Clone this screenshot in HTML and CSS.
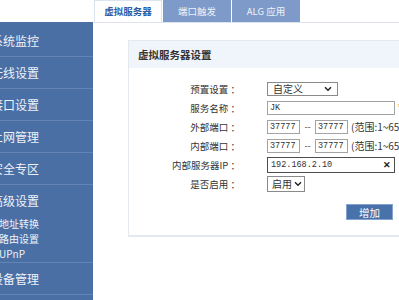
FILE: index.html
```html
<!DOCTYPE html>
<html lang="zh-CN">
<head>
  <meta charset="UTF-8">
  <meta name="viewport" content="width=device-width, initial-scale=1">
  <title>虚拟服务器</title>
  <link rel="stylesheet" href="styles.css">
</head>
<body>
  <div class="page">

    <aside class="sidebar">
      <ul class="nav">
        <li class="nav-item">系统监控</li>
        <li class="nav-item">无线设置</li>
        <li class="nav-item">接口设置</li>
        <li class="nav-item">上网管理</li>
        <li class="nav-item">安全专区</li>
        <li class="nav-item nav-group">
          <div class="nav-title">高级设置</div>
          <ul class="subnav">
            <li>地址转换</li>
            <li>路由设置</li>
            <li>UPnP</li>
          </ul>
        </li>
        <li class="nav-item">设备管理</li>
      </ul>
    </aside>

    <main class="content">
      <nav class="tabs">
        <a class="tab active">虚拟服务器</a>
        <a class="tab">端口触发</a>
        <a class="tab">ALG 应用</a>
      </nav>

      <section class="panel">
        <h3 class="panel-title">虚拟服务器设置</h3>

        <div class="form">
          <label>预置设置 ：</label>
          <div class="field">
            <div class="select select-wide">
              <span>自定义</span>
              <svg width="8" height="6" viewBox="0 0 8 6"><path d="M1 1.2 4 4.3 7 1.2" fill="none" stroke="#222" stroke-width="1.4"/></svg>
            </div>
          </div>

          <label>服务名称 ：</label>
          <div class="field">
            <input class="input input-wide" type="text" value="JK">
            <span class="required">*</span>
          </div>

          <label>外部端口 ：</label>
          <div class="field">
            <input class="input input-port" type="text" value="37777">
            <span class="dash">--</span>
            <input class="input input-port" type="text" value="37777">
            <span class="hint">(范围:1~65535)</span>
          </div>

          <label>内部端口 ：</label>
          <div class="field">
            <input class="input input-port" type="text" value="37777">
            <span class="dash">--</span>
            <input class="input input-port" type="text" value="37777">
            <span class="hint">(范围:1~65535)</span>
          </div>

          <label>内部服务器IP ：</label>
          <div class="field">
            <div class="input-clear">
              <input class="input input-wide input-focus" type="text" value="192.168.2.10">
              <span class="clear">✕</span>
            </div>
          </div>

          <label>是否启用 ：</label>
          <div class="field">
            <div class="select select-small">
              <span>启用</span>
              <svg width="8" height="6" viewBox="0 0 8 6"><path d="M1 1.2 4 4.3 7 1.2" fill="none" stroke="#222" stroke-width="1.4"/></svg>
            </div>
          </div>
        </div>

        <div class="actions">
          <button class="btn">增加</button>
        </div>
      </section>
    </main>

  </div>
</body>
</html>
```

FILE: styles.css
```css
* {
  box-sizing: border-box;
}
body {
  margin: 0;
  font-family: "Noto Sans CJK SC", sans-serif;
  color: #333;
  background-color: #fff;
  overflow: hidden;
}
.page {
  display: flex;
  width: 399px;
  height: 300px;
}

/* menu lateral */
.sidebar {
  flex: none;
  width: 93px;
  margin-top: 22px;
  padding-top: 3px;
  background-color: #4a6fa5;
}
.nav, .subnav {
  list-style: none;
  margin: 0;
  padding: 0;
}
.nav-item {
  height: 32px;
  line-height: 31px;
  font-size: 12px;
  color: #eef2f8;
  text-indent: -9px;
  white-space: nowrap;
  overflow: hidden;
  border-bottom: 1px solid #6383b5;
}
.nav-group {
  height: 78px;
}
.nav-title {
  height: 31px;
}
.subnav li {
  height: 15px;
  line-height: 15px;
  font-size: 10px;
  text-indent: -1px;
}

/* abas */
.content {
  flex: 1;
  margin-left: 1px;
  min-width: 0;
}
.tabs {
  display: flex;
  height: 23px;
  border-bottom: 1px solid #dfe4ec;
}
.tab {
  width: 68px;
  height: 22px;
  margin-right: 1px;
  line-height: 22px;
  text-align: center;
  font-size: 9.5px;
  color: #eef2fa;
  background-color: #7d9ac8;
}
.tab.active {
  color: #2d5ca6;
  font-weight: bold;
  background-color: #fff;
  border: 1px solid #dde3ec;
  border-bottom: none;
  line-height: 21px;
}

/* painel */
.panel {
  width: 290px;
  margin: 17px 0 0 34px;
  border: 1px solid #e4e8ef;
  border-bottom-width: 2px;
}
.panel-title {
  margin: 0;
  height: 27px;
  line-height: 27px;
  padding-left: 9px;
  font-size: 10.5px;
  font-weight: bold;
  color: #333;
  background-color: #f0f4fb;
}
.form {
  display: grid;
  grid-template-columns: 111px 1fr;
  grid-auto-rows: 19px;
  column-gap: 27px;
  align-items: center;
  padding-top: 11px;
}
.form label {
  text-align: right;
  font-size: 9.5px;
  white-space: nowrap;
}
.field {
  display: flex;
  align-items: center;
  white-space: nowrap;
}
.input {
  height: 14px;
  padding: 0 2px;
  border: 1px solid #a3a3a3;
  font-family: "Liberation Mono", monospace;
  font-size: 8.5px;
  color: #333;
  outline: none;
}
.input-wide {
  width: 128px;
}
.input-port {
  width: 33px;
}
.input-focus {
  height: 16px;
  padding-left: 3px;
  border-color: #4d4d4d;
}
.input-clear {
  position: relative;
  display: flex;
  align-items: center;
}
.clear {
  position: absolute;
  top: 0;
  right: 4px;
  font-size: 9px;
  line-height: 16px;
  font-weight: bold;
  color: #222;
}
.required {
  margin-left: 2px;
  font-size: 12px;
  line-height: 12px;
  color: #f0a030;
}
.dash {
  width: 15px;
  text-align: center;
  font-size: 9px;
  color: #444;
}
.hint {
  margin-left: 3px;
  font-size: 10px;
}
.select {
  display: flex;
  align-items: center;
  justify-content: space-between;
  height: 14px;
  padding: 0 5px;
  border: 1px solid #8a8a8a;
  font-size: 10px;
}
.select-wide {
  width: 71px;
}
.select-small {
  width: 38px;
  height: 16px;
  padding: 0 2px 0 4px;
}
.actions {
  display: flex;
  justify-content: flex-end;
  padding: 11px 24px 15px;
}
.btn {
  width: 47px;
  height: 16px;
  padding: 0;
  border: 1px solid #86a2cf;
  background-color: #4a72aa;
  color: #fff;
  font-family: inherit;
  font-size: 10.5px;
  cursor: pointer;
}
```
